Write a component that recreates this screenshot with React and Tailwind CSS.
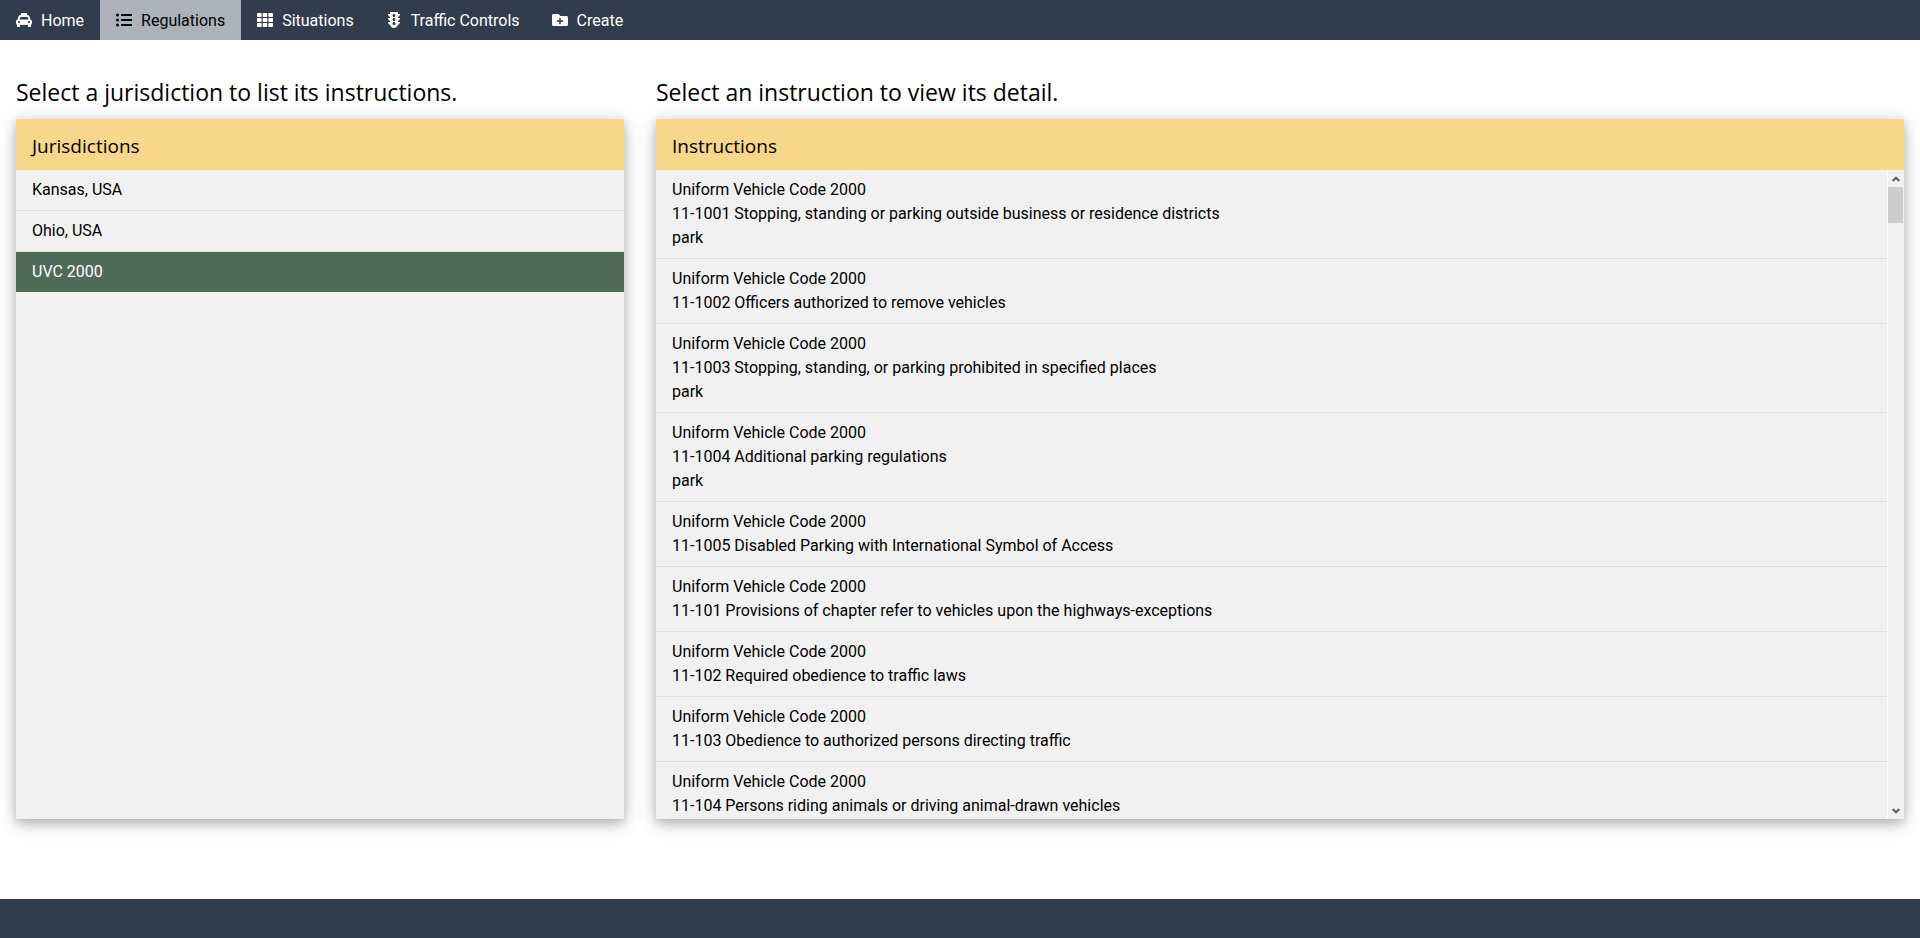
import { FaTaxi, FaListUl, FaTh, FaTrafficLight, FaFolderPlus } from "react-icons/fa";

const NAV = [
  { label: "Home", Icon: FaTaxi },
  { label: "Regulations", Icon: FaListUl, active: true },
  { label: "Situations", Icon: FaTh },
  { label: "Traffic Controls", Icon: FaTrafficLight },
  { label: "Create", Icon: FaFolderPlus },
];

const JURISDICTIONS = [
  { name: "Kansas, USA" },
  { name: "Ohio, USA" },
  { name: "UVC 2000", selected: true },
];

const CODE = "Uniform Vehicle Code 2000";

const INSTRUCTIONS = [
  { title: "11-1001 Stopping, standing or parking outside business or residence districts", action: "park" },
  { title: "11-1002 Officers authorized to remove vehicles" },
  { title: "11-1003 Stopping, standing, or parking prohibited in specified places", action: "park" },
  { title: "11-1004 Additional parking regulations", action: "park" },
  { title: "11-1005 Disabled Parking with International Symbol of Access" },
  { title: "11-101 Provisions of chapter refer to vehicles upon the highways-exceptions" },
  { title: "11-102 Required obedience to traffic laws" },
  { title: "11-103 Obedience to authorized persons directing traffic" },
  { title: "11-104 Persons riding animals or driving animal-drawn vehicles" },
];

function Panel({ title, children }) {
  return (
    <div className="flex h-[700px] flex-col bg-[#f1f1f1] shadow-[0_4px_10px_0_rgba(0,0,0,0.2),0_4px_20px_0_rgba(0,0,0,0.19)]">
      <header className="bg-[#f7d789] px-4 pt-3 pb-2">
        <h2 className="font-['Open_Sans',sans-serif] text-[19px] leading-[31px]">{title}</h2>
      </header>
      {children}
    </div>
  );
}

function Scrollbar() {
  return (
    <div aria-hidden="true" className="flex w-[17px] shrink-0 flex-col border-l border-white bg-[#f0f0f0] pr-px">
      <div className="flex h-[17px] items-center justify-center">
        <svg width="8" height="6" viewBox="0 0 8 6" fill="none" stroke="#606060" strokeWidth="2">
          <path d="M0.7 5 L4 1.7 L7.3 5" />
        </svg>
      </div>
      <div className="h-9 bg-[#cdcdcd]" />
      <div className="flex-1" />
      <div className="flex h-[17px] items-center justify-center">
        <svg width="8" height="6" viewBox="0 0 8 6" fill="none" stroke="#606060" strokeWidth="2">
          <path d="M0.7 1 L4 4.3 L7.3 1" />
        </svg>
      </div>
    </div>
  );
}

export default function App() {
  return (
    <div className="flex min-h-screen flex-col bg-white font-['Roboto',sans-serif] text-base text-black">
      <nav className="flex bg-[#313d4d]">
        {NAV.map(({ label, Icon, active }) => (
          <a
            key={label}
            href="#"
            aria-current={active ? "page" : undefined}
            className={
              active
                ? "flex h-10 items-center gap-[9px] bg-[#adb1b8] px-4 text-black"
                : "flex h-10 items-center gap-[9px] px-4 text-white"
            }
          >
            <Icon className="h-4 w-auto" />
            <span className="pt-0.5">{label}</span>
          </a>
        ))}
      </nav>

      <main className="grid flex-1 grid-cols-3 pt-[34px] pb-20">
        <section className="px-4">
          <h1 className="mb-[9px] font-['Open_Sans',sans-serif] text-[23px] leading-9">
            Select a jurisdiction to list its instructions.
          </h1>
          <Panel title="Jurisdictions">
            <ul>
              {JURISDICTIONS.map(({ name, selected }) => (
                <li key={name} className="border-b border-[#dddddd] last:border-b-0">
                  <button
                    type="button"
                    aria-pressed={Boolean(selected)}
                    className={
                      selected
                        ? "block w-full bg-[#4f6b58] px-4 py-2 text-left text-white"
                        : "block w-full px-4 py-2 text-left"
                    }
                  >
                    {name}
                  </button>
                </li>
              ))}
            </ul>
          </Panel>
        </section>

        <section className="col-span-2 px-4">
          <h1 className="mb-[9px] font-['Open_Sans',sans-serif] text-[23px] leading-9">
            Select an instruction to view its detail.
          </h1>
          <Panel title="Instructions">
            <div className="flex min-h-0 flex-1">
              <ul className="flex-1 overflow-y-auto [scrollbar-width:none]">
                {INSTRUCTIONS.map(({ title, action }) => (
                  <li key={title} className="border-b border-[#dddddd]">
                    <button type="button" className="block w-full px-4 py-2 text-left">
                      <span className="block">{CODE}</span>
                      <span className="block">{title}</span>
                      {action && <span className="block">{action}</span>}
                    </button>
                  </li>
                ))}
              </ul>
              <Scrollbar />
            </div>
          </Panel>
        </section>
      </main>

      <footer className="h-[39px] bg-[#313d4d]" />
    </div>
  );
}
